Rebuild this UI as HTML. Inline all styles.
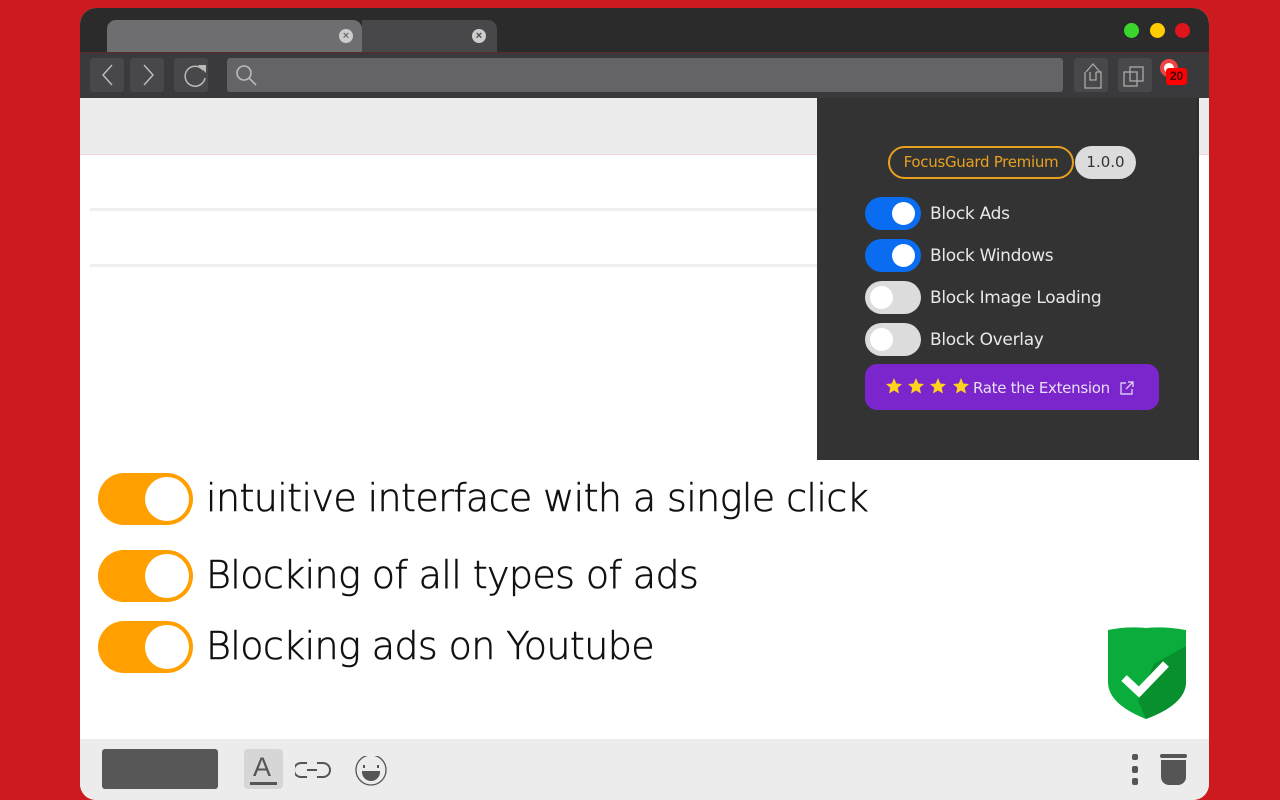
<!DOCTYPE html>
<html><head><style>
*{margin:0;padding:0;box-sizing:border-box}
body{width:1280px;height:800px;background:#cc1a1f;position:relative;overflow:hidden;font-family:"Liberation Sans",sans-serif}
.a{position:absolute}
.win{left:80px;top:8px;width:1129px;height:792px;border-radius:16px;background:#fff;overflow:hidden}
.tg{position:absolute;border-radius:20px}
.kn{position:absolute;border-radius:50%;background:#fff}
.lbl{position:absolute;color:#e8e8e8;font-size:17px;font-family:"DejaVu Sans","Liberation Sans",sans-serif;letter-spacing:-0.3px}
.feat{position:absolute;left:98px;width:95px;height:52px;border-radius:26px;background:#ff9f00}
.feat i{position:absolute;right:4px;top:4px;width:44px;height:44px;border-radius:50%;background:#fff}
.ft{position:absolute;left:206px;font-size:38px;color:#111;font-family:"DejaVu Sans","Liberation Sans",sans-serif;font-weight:300;letter-spacing:-0.6px;-webkit-text-stroke:0.6px #111}
</style></head><body>
<div class="a win">
 <div class="a" style="left:0;top:0;width:1129px;height:44px;background:#2b2b2b"></div>
 <div class="a" style="left:27px;top:12px;width:255px;height:33px;background:#6e6e70;border-radius:9px 9px 0 0"></div>
 <div class="a" style="left:282px;top:12px;width:135px;height:33px;background:#48484a;border-radius:0 9px 0 0"></div>
 <div class="a" style="left:259px;top:21px;width:14px;height:14px;border-radius:50%;background:#ccc;color:#6e6e70;font-size:11px;line-height:14px;text-align:center;font-weight:bold">×</div>
 <div class="a" style="left:392px;top:21px;width:14px;height:14px;border-radius:50%;background:#ccc;color:#48484a;font-size:11px;line-height:14px;text-align:center;font-weight:bold">×</div>
 <div class="a" style="left:1044px;top:15px;width:15px;height:15px;border-radius:50%;background:#3ad62e"></div>
 <div class="a" style="left:1070px;top:15px;width:15px;height:15px;border-radius:50%;background:#ffcc00"></div>
 <div class="a" style="left:1095px;top:15px;width:15px;height:15px;border-radius:50%;background:#e0141b"></div>
 <div class="a" style="left:0;top:44px;width:1129px;height:46px;background:#3a3a3c;border-top:1px solid #5a2a2a"></div>
 <div class="a" style="left:10px;top:50px;width:34px;height:34px;background:#48484a;border-radius:3px"></div>
 <div class="a" style="left:50px;top:50px;width:34px;height:34px;background:#48484a;border-radius:3px"></div>
 <div class="a" style="left:94px;top:50px;width:34px;height:34px;background:#48484a;border-radius:3px"></div>
 <svg class="a" style="left:10px;top:50px" width="118" height="34" fill="none" stroke="#bbb" stroke-width="1.5"><path d="M22 7 L13 17 L22 27"/><path d="M54 7 L63 17 L54 27"/><path d="M113 12 A10 10 0 1 0 115 20"/><path d="M108 7 L116 7 L116 15Z" fill="#bbb" stroke="none"/></svg>
 <div class="a" style="left:147px;top:50px;width:836px;height:34px;background:#646467;border-radius:3px"></div>
 <svg class="a" style="left:154px;top:55px" width="26" height="26" fill="none" stroke="#bbb" stroke-width="1.6"><circle cx="10" cy="10" r="7"/><path d="M15 15 L22 22"/></svg>
 <div class="a" style="left:994px;top:50px;width:34px;height:34px;background:#48484a;border-radius:3px"></div>
 <div class="a" style="left:1038px;top:50px;width:34px;height:34px;background:#48484a;border-radius:3px"></div>
 <svg class="a" style="left:994px;top:50px" width="80" height="34" fill="none" stroke="#aaa" stroke-width="1.3"><path d="M11 14 L11 30 L27 30 L27 14 L22 14 M16 14 L16 22 L22 22 L22 14"/><path d="M12 14 L19 6 L26 14"/><rect x="50" y="14" width="13" height="14"/><rect x="56" y="9" width="13" height="14"/></svg>
 <div class="a" style="left:1080px;top:51px;width:18px;height:18px;border-radius:50%;background:#fff;border:4px solid #e44"></div>
 <div class="a" style="left:1086px;top:60px;width:21px;height:17px;background:#f00;border-radius:3px;color:#400;font-size:12px;font-weight:bold;text-align:center;line-height:17px">20</div>
 <div class="a" style="left:0;top:90px;width:1129px;height:57px;background:#ececec;border-bottom:1px solid #f2d4d4"></div>
 <div class="a" style="left:10px;top:200px;width:730px;height:3px;background:#eee"></div>
 <div class="a" style="left:10px;top:256px;width:730px;height:3px;background:#eee"></div>
 <div class="a" style="left:0;top:731px;width:1129px;height:61px;background:#ececec"></div>
 <div class="a" style="left:22px;top:741px;width:116px;height:40px;background:#575757;border-radius:3px"></div>
 <div class="a" style="left:164px;top:741px;width:39px;height:40px;background:#d6d6d6;border-radius:4px"></div>
 <div class="a" style="left:173px;top:744px;font-size:27px;color:#555;font-weight:300">A</div>
 <div class="a" style="left:170px;top:774px;width:27px;height:3px;background:#555"></div>
 <svg class="a" style="left:215px;top:748px" width="95" height="30" fill="none" stroke="#555" stroke-width="2"><path d="M12 7 H6 A7 7 0 0 0 6 21 H12 M22 7 H28 A7 7 0 0 1 28 21 H22 M12 14 H22"/><circle cx="76" cy="14" r="15" stroke-width="1.3"/><path d="M69 9v3M83 9v3" /><path d="M68 16 H84 A8 8 0 0 1 68 16Z" fill="#555"/></svg>
 <div class="a" style="left:1052px;top:746px;width:6px;height:6px;border-radius:2px;background:#555"></div>
 <div class="a" style="left:1052px;top:758px;width:6px;height:7px;border-radius:2px;background:#555"></div>
 <div class="a" style="left:1052px;top:770px;width:6px;height:7px;border-radius:2px;background:#555"></div>
 <div class="a" style="left:1080px;top:746px;width:27px;height:4px;background:#555;border-radius:2px"></div>
 <div class="a" style="left:1081px;top:752px;width:25px;height:25px;background:#555;border-radius:0 0 8px 8px"></div>
 <div class="a" style="left:737px;top:90px;width:382px;height:362px;background:#333"></div>
 <div class="a" style="left:1117px;top:90px;width:2px;height:362px;background:#2c2c2c"></div>
</div>
<div class="a" style="left:888px;top:146px;width:186px;height:33px;border:2px solid #e8a11f;border-radius:17px;color:#e8a11f;font-size:15px;text-align:center;line-height:29px;font-family:'DejaVu Sans',sans-serif;letter-spacing:-0.3px">FocusGuard Premium</div>
<div class="a" style="left:1075px;top:146px;width:61px;height:33px;background:#dcdcdc;border-radius:17px;color:#333;font-size:15px;text-align:center;line-height:33px;font-family:'DejaVu Sans',sans-serif">1.0.0</div>
<div class="tg" style="left:865px;top:197px;width:56px;height:33px;background:#0a6cf0"><i class="kn" style="left:27px;top:5px;width:23px;height:23px"></i></div>
<div class="tg" style="left:865px;top:239px;width:56px;height:33px;background:#0a6cf0"><i class="kn" style="left:27px;top:5px;width:23px;height:23px"></i></div>
<div class="tg" style="left:865px;top:281px;width:56px;height:33px;background:#dcdcdc"><i class="kn" style="left:5px;top:5px;width:23px;height:23px"></i></div>
<div class="tg" style="left:865px;top:323px;width:56px;height:33px;background:#dcdcdc"><i class="kn" style="left:5px;top:5px;width:23px;height:23px"></i></div>
<div class="lbl" style="left:930px;top:204px">Block Ads</div>
<div class="lbl" style="left:930px;top:246px">Block Windows</div>
<div class="lbl" style="left:930px;top:288px">Block Image Loading</div>
<div class="lbl" style="left:930px;top:330px">Block Overlay</div>
<div class="a" style="left:865px;top:364px;width:294px;height:46px;background:#7b25cc;border-radius:12px"></div>
<svg class="a" style="left:885px;top:377px" width="88" height="20" fill="#ffd21f"><defs><path id="s" d="M9 1 L11.3 6.5 L17 7 L12.7 10.8 L14 16.5 L9 13.5 L4 16.5 L5.3 10.8 L1 7 L6.7 6.5Z"/></defs><use href="#s"/><use href="#s" x="22"/><use href="#s" x="44"/><use href="#s" x="67"/></svg>
<div class="a" style="left:973px;top:379px;color:#e8e0f4;font-size:15px;font-family:'DejaVu Sans',sans-serif;letter-spacing:-0.3px">Rate the Extension</div>
<svg class="a" style="left:1119px;top:380px" width="16" height="16" fill="none" stroke="#d8c8ee" stroke-width="1.4"><path d="M7 3H2V14H13V9M9 2H14V7M14 2L7 9"/></svg>
<div class="feat" style="top:473px"><i></i></div>
<div class="feat" style="top:550px"><i></i></div>
<div class="feat" style="top:621px"><i></i></div>
<div class="ft" style="top:476px">intuitive interface with a single click</div>
<div class="ft" style="top:553px">Blocking of all types of ads</div>
<div class="ft" style="top:624px">Blocking ads on Youtube</div>
<svg class="a" style="left:1106px;top:626px" width="82" height="94"><path d="M2 4 Q22 0 40 2 Q58 0 80 4 V56 Q80 78 40 93 Q2 78 2 56Z" fill="#0aad3c"/><path d="M48 38 L80 20 V56 Q80 78 40 93 L32 75Z" fill="#08902f"/><path d="M18 52 L33 66 L60 38" stroke="#fff" stroke-width="8" fill="none"/></svg>
</body></html>
